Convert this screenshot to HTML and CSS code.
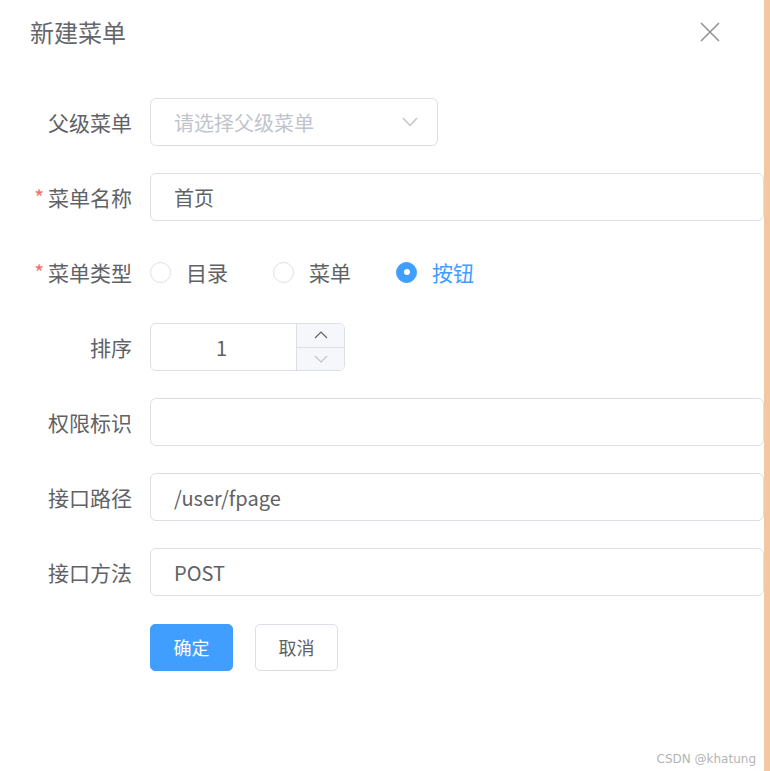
FILE: index.html
```html
<!DOCTYPE html>
<html lang="zh-CN">
  <head>
    <meta charset="UTF-8" />
    <meta name="viewport" content="width=device-width, initial-scale=1.0" />
    <title>新建菜单</title>
    <link rel="stylesheet" href="styles.css">
  </head>
  <body>
    <div class="page">
      <main class="dialog">
        <header class="dialog-header">
          <span class="dialog-title">新建菜单</span>
          <button class="close-btn" aria-label="关闭">
            <svg width="20" height="20" viewBox="0 0 20 20">
              <path d="M1 1 L19 19 M19 1 L1 19" stroke="#909399" stroke-width="1.6" fill="none" />
            </svg>
          </button>
        </header>

        <form class="menu-form">
          <div class="form-item">
            <label class="form-label">父级菜单</label>
            <div class="select">
              <span class="placeholder">请选择父级菜单</span>
              <svg class="select-arrow" width="16" height="10" viewBox="0 0 16 10">
                <path d="M1 1 L8 8.5 L15 1" stroke="#c0c4cc" stroke-width="1.4" fill="none" />
              </svg>
            </div>
          </div>

          <div class="form-item">
            <label class="form-label is-required">菜单名称</label>
            <div class="input">首页</div>
          </div>

          <div class="form-item">
            <label class="form-label is-required">菜单类型</label>
            <div class="radio-group">
              <span class="radio"><span class="radio-inner"></span>目录</span>
              <span class="radio"><span class="radio-inner"></span>菜单</span>
              <span class="radio checked"><span class="radio-inner"></span>按钮</span>
            </div>
          </div>

          <div class="form-item">
            <label class="form-label">排序</label>
            <div class="number-input">
              <span class="number-value">1</span>
              <div class="number-controls">
                <span class="ctrl">
                  <svg width="14" height="8" viewBox="0 0 14 8"><path d="M1 7 L7 1 L13 7" stroke="#606266" stroke-width="1.2" fill="none" /></svg>
                </span>
                <span class="ctrl">
                  <svg width="14" height="8" viewBox="0 0 14 8"><path d="M1 1 L7 7 L13 1" stroke="#c0c4cc" stroke-width="1.2" fill="none" /></svg>
                </span>
              </div>
            </div>
          </div>

          <div class="form-item">
            <label class="form-label">权限标识</label>
            <div class="input"></div>
          </div>

          <div class="form-item">
            <label class="form-label">接口路径</label>
            <div class="input">/user/fpage</div>
          </div>

          <div class="form-item">
            <label class="form-label">接口方法</label>
            <div class="input">POST</div>
          </div>

          <div class="form-item">
            <span class="form-label"></span>
            <div class="actions">
              <button type="button" class="btn btn-primary">确定</button>
              <button type="button" class="btn">取消</button>
            </div>
          </div>
        </form>

        <div class="watermark">CSDN @khatung</div>
      </main>
      <div class="side-bar"></div>
    </div>
  </body>
</html>
```

FILE: styles.css
```css
body {
  margin: 0;
  padding: 0;
  background: #fff;
  font-family: "Noto Sans CJK SC", "Open Sans", sans-serif;
  color: #606266;
}
.page {
  display: flex;
  height: 771px;
}
.dialog {
  flex: 1;
  position: relative;
  background: #fff;
}
.side-bar {
  width: 6px;
  background: #f3c8a0;
}
.dialog-header {
  display: flex;
  align-items: center;
  justify-content: space-between;
  padding: 14px 44px 0 30px;
  height: 36px;
}
.dialog-title {
  font-size: 24px;
  color: #646669;
  line-height: 36px;
}
.close-btn {
  border: none;
  background: none;
  padding: 0;
  display: flex;
  cursor: pointer;
}

.menu-form {
  margin-top: 48px;
}
.form-item {
  display: flex;
  align-items: center;
  height: 48px;
  margin-bottom: 27px;
}
.form-label {
  width: 132px;
  padding-right: 18px;
  text-align: right;
  font-size: 21px;
  color: #606266;
  flex-shrink: 0;
}
.form-label.is-required::before {
  content: "*";
  color: #f56c6c;
  margin-right: 4px;
}

.input,
.select,
.number-input {
  box-sizing: border-box;
  height: 48px;
  border: 1px solid #dcdfe6;
  border-radius: 6px;
  font-size: 20px;
  color: #606266;
  display: flex;
  align-items: center;
}
.input {
  flex: 1;
  padding: 0 23px;
}
.select {
  width: 288px;
  padding: 0 19px 0 23px;
  justify-content: space-between;
}
.placeholder {
  color: #c0c4cc;
}

.radio-group {
  display: flex;
  align-items: center;
}
.radio {
  display: flex;
  align-items: center;
  font-size: 21px;
  color: #606266;
  margin-right: 45px;
}
.radio-inner {
  box-sizing: border-box;
  width: 21px;
  height: 21px;
  border: 1px solid #dcdfe6;
  border-radius: 50%;
  margin-right: 15px;
  display: flex;
  align-items: center;
  justify-content: center;
}
.radio.checked {
  color: #409eff;
}
.radio.checked .radio-inner {
  background: #409eff;
  border-color: #409eff;
}
.radio.checked .radio-inner::after {
  content: "";
  width: 6px;
  height: 6px;
  border-radius: 50%;
  background: #fff;
}

.number-input {
  width: 195px;
  overflow: hidden;
}
.number-value {
  flex: 1;
  text-align: center;
  padding-right: 4px;
}
.number-controls {
  width: 47px;
  height: 100%;
  border-left: 1px solid #dcdfe6;
  display: flex;
  flex-direction: column;
  background: #f5f7fa;
}
.ctrl {
  flex: 1;
  display: flex;
  align-items: center;
  justify-content: center;
}
.ctrl + .ctrl {
  border-top: 1px solid #dcdfe6;
}

.actions {
  display: flex;
  gap: 22px;
}
.btn {
  width: 83px;
  height: 47px;
  border: 1px solid #dcdfe6;
  border-radius: 5px;
  background: #fff;
  color: #606266;
  font-family: "Noto Sans CJK SC", sans-serif;
  font-size: 18px;
  padding: 0;
}
.btn-primary {
  background: #409eff;
  border-color: #409eff;
  color: #fff;
}

.watermark {
  position: absolute;
  right: 8px;
  bottom: 5px;
  font-family: "DejaVu Sans", sans-serif;
  font-size: 12px;
  color: #b4b4b4;
}
```
